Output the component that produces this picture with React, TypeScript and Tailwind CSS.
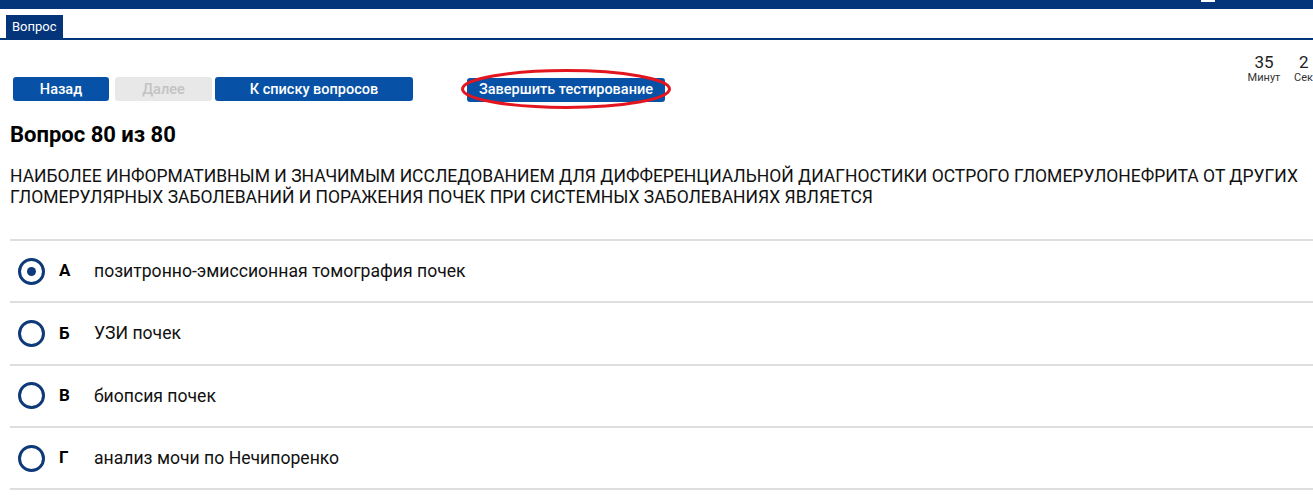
import React from "react";

const options = [
  { l: "А", t: "позитронно-эмиссионная томография почек", sel: true },
  { l: "Б", t: "УЗИ почек", sel: false },
  { l: "В", t: "биопсия почек", sel: false },
  { l: "Г", t: "анализ мочи по Нечипоренко", sel: false },
];

export default function App() {
  return (
    <div className="w-[1313px] h-[500px] overflow-hidden bg-white text-black" style={{ fontFamily: "Roboto, 'Liberation Sans', sans-serif" }}>
      <div className="h-[9px] bg-[#04347a] relative">
        <div className="absolute left-[1201px] top-0 w-[14px] h-[2px] bg-white" />
      </div>
      <div className="h-[31px] border-b-2 border-[#04347a] flex items-end pl-[6px]">
        <div className="h-[23px] px-[6px] bg-[#04347a] text-white text-[13px] leading-[23px]">Вопрос</div>
      </div>
      <div className="relative h-[80px]">
        <div className="absolute left-[1244px] top-[12px] flex text-center">
          <div className="w-[40px]">
            <div className="text-[17px] leading-[20px] text-[#222]">35</div>
            <div className="text-[11px] leading-[12px] text-[#333]">Минут</div>
          </div>
          <div className="ml-[10px] w-[30px]">
            <div className="text-[17px] leading-[20px] text-[#222] text-left pl-[5px]">2</div>
            <div className="text-[11px] leading-[12px] text-[#333] text-left">Сек</div>
          </div>
        </div>
        <div className="absolute left-[13px] top-[37px] flex items-center">
          <button className="w-[96px] h-[24px] rounded-[3px] bg-[#0752a6] text-white text-[14.5px] font-medium">Назад</button>
          <button className="ml-[6px] w-[97px] h-[24px] rounded-[3px] bg-[#e8e8e8] text-[#c3c3c3] text-[14.5px] font-medium">Далее</button>
          <button className="ml-[3px] w-[198px] h-[24px] rounded-[3px] bg-[#0752a6] text-white text-[14.5px] font-medium">К списку вопросов</button>
          <div className="relative ml-[54px]">
            <button className="w-[198px] h-[24px] rounded-[3px] bg-[#0752a6] text-white text-[14.5px] font-medium">Завершить тестирование</button>
            <svg className="absolute left-[-7px] top-[-9px]" width="212" height="42" viewBox="0 0 212 42">
              <ellipse cx="106" cy="21" rx="103.5" ry="18.5" fill="none" stroke="#e3161f" strokeWidth="3" />
            </svg>
          </div>
        </div>
      </div>
      <div className="pl-[10px]">
        <div className="text-[22px] font-bold leading-[26px] mt-[2px]">Вопрос 80 из 80</div>
        <div className="mt-[18px] text-[17.5px] leading-[21px] text-[#111] -mr-[4px]">
          НАИБОЛЕЕ ИНФОРМАТИВНЫМ И ЗНАЧИМЫМ ИССЛЕДОВАНИЕМ ДЛЯ ДИФФЕРЕНЦИАЛЬНОЙ ДИАГНОСТИКИ ОСТРОГО ГЛОМЕРУЛОНЕФРИТА ОТ ДРУГИХ ГЛОМЕРУЛЯРНЫХ ЗАБОЛЕВАНИЙ И ПОРАЖЕНИЯ ПОЧЕК ПРИ СИСТЕМНЫХ ЗАБОЛЕВАНИЯХ ЯВЛЯЕТСЯ
        </div>
        <div className="mt-[31px] border-t-2 border-[#dedede]">
          {options.map((o) => (
            <div key={o.l} className="h-[62.3px] border-b-2 border-[#dedede] flex items-center">
              <div className="ml-[8px] w-[27px] h-[27px] rounded-full border-[3px] border-[#0e3a7a] flex items-center justify-center">
                {o.sel && <div className="w-[9px] h-[9px] rounded-full bg-[#0e3a7a]" />}
              </div>
              <div className="ml-[14px] w-[35px] text-[17px] font-bold">{o.l}</div>
              <div className="text-[17.6px] text-[#111]">{o.t}</div>
            </div>
          ))}
        </div>
      </div>
    </div>
  );
}
